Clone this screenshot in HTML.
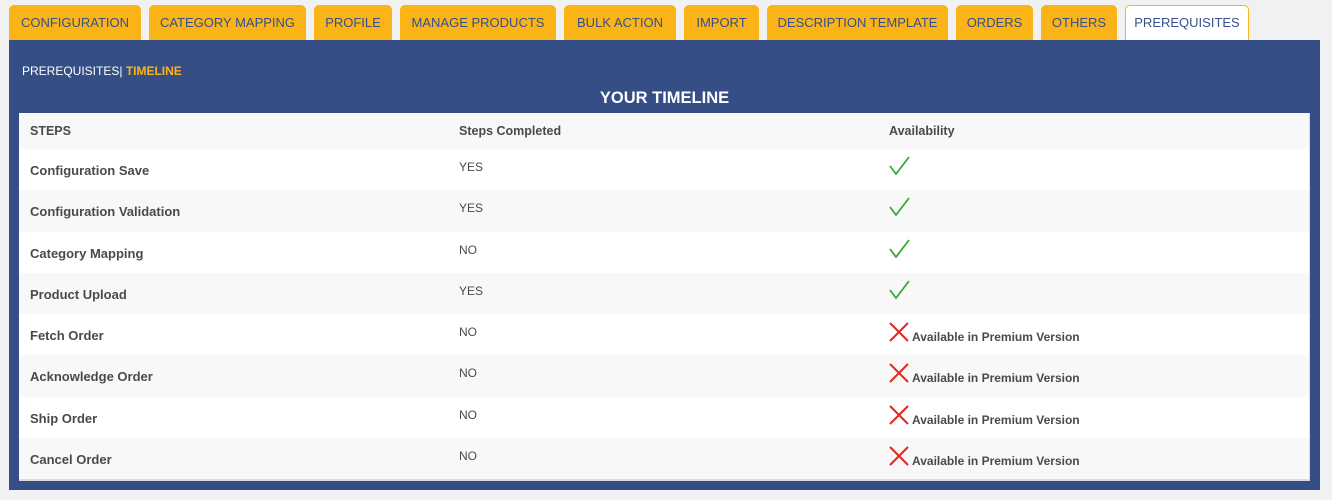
<!DOCTYPE html>
<html><head><style>
body{margin:0;background:#f1f1f1;width:1332px;height:500px;position:relative;font-family:"Liberation Sans",sans-serif;overflow:hidden}
.tab{position:absolute;top:5px;height:35px;background:#fab418;border-radius:5px 5px 0 0;color:#35508a;font-size:13px;line-height:36px;text-align:center;box-sizing:border-box}
.tab.act{background:#fff;border:1px solid #fab418;border-bottom:none;line-height:33px;color:#35508a}
.panel{position:absolute;left:9px;top:40px;width:1311px;height:450px;background:#354f86}
.sub{position:absolute;left:13px;top:24px;font-size:12px;color:#fff}
.sub b{color:#fab418}
.title{position:absolute;left:0;width:100%;top:49px;text-align:center;color:#fff;font-weight:bold;font-size:16.5px}
.tbl{position:absolute;left:10px;top:73px;width:1290px;background:#fff;border-right:1px solid #ddd;border-bottom:2px solid #ddd}
.row{position:relative;height:41.25px;font-size:13px;color:#4a4a4a;font-weight:bold}
.row:nth-child(odd){background:#f8f8f8}
.row.h{height:36px}
.c1{position:absolute;left:11px;top:14px}
.c2{position:absolute;left:440px;top:11px;font-weight:normal;font-size:12px}
.c3{position:absolute;left:870px;top:6px}
.x{top:8px}
.h .c1,.h .c2,.h .c3{top:11px;font-weight:bold;font-size:12.5px}
.prem{font-size:12px;position:relative;top:-1px;margin-left:3px}
</style></head><body>
<div class="tab" style="left:9px;width:132px">CONFIGURATION</div>
<div class="tab" style="left:149px;width:157px">CATEGORY MAPPING</div>
<div class="tab" style="left:314px;width:78px">PROFILE</div>
<div class="tab" style="left:400px;width:156px">MANAGE PRODUCTS</div>
<div class="tab" style="left:564px;width:112px">BULK ACTION</div>
<div class="tab" style="left:684px;width:75px">IMPORT</div>
<div class="tab" style="left:767px;width:181px">DESCRIPTION TEMPLATE</div>
<div class="tab" style="left:956px;width:77px">ORDERS</div>
<div class="tab" style="left:1041px;width:76px">OTHERS</div>
<div class="tab act" style="left:1125px;width:124px">PREREQUISITES</div>
<div class="panel">
<div class="sub">PREREQUISITES| <b>TIMELINE</b></div>
<div class="title">YOUR TIMELINE</div>
<div class="tbl">
<div class="row h"><span class="c1">STEPS</span><span class="c2">Steps Completed</span><span class="c3">Availability</span></div>
<div class="row"><span class="c1">Configuration Save</span><span class="c2">YES</span><span class="c3"><svg width="22" height="22" viewBox="0 0 22 22"><path d="M1 11 L7 19 L20 2" fill="none" stroke="#3aa832" stroke-width="1.8"/></svg></span></div>
<div class="row"><span class="c1">Configuration Validation</span><span class="c2">YES</span><span class="c3"><svg width="22" height="22" viewBox="0 0 22 22"><path d="M1 11 L7 19 L20 2" fill="none" stroke="#3aa832" stroke-width="1.8"/></svg></span></div>
<div class="row"><span class="c1">Category Mapping</span><span class="c2">NO</span><span class="c3"><svg width="22" height="22" viewBox="0 0 22 22"><path d="M1 11 L7 19 L20 2" fill="none" stroke="#3aa832" stroke-width="1.8"/></svg></span></div>
<div class="row"><span class="c1">Product Upload</span><span class="c2">YES</span><span class="c3"><svg width="22" height="22" viewBox="0 0 22 22"><path d="M1 11 L7 19 L20 2" fill="none" stroke="#3aa832" stroke-width="1.8"/></svg></span></div>
<div class="row"><span class="c1">Fetch Order</span><span class="c2">NO</span><span class="c3 x"><svg width="20" height="20" viewBox="0 0 20 20"><path d="M1 1 L19 19 M19 1 L1 19" stroke="#e5261a" stroke-width="2"/></svg><span class="prem">Available in Premium Version</span></span></div>
<div class="row"><span class="c1">Acknowledge Order</span><span class="c2">NO</span><span class="c3 x"><svg width="20" height="20" viewBox="0 0 20 20"><path d="M1 1 L19 19 M19 1 L1 19" stroke="#e5261a" stroke-width="2"/></svg><span class="prem">Available in Premium Version</span></span></div>
<div class="row"><span class="c1">Ship Order</span><span class="c2">NO</span><span class="c3 x"><svg width="20" height="20" viewBox="0 0 20 20"><path d="M1 1 L19 19 M19 1 L1 19" stroke="#e5261a" stroke-width="2"/></svg><span class="prem">Available in Premium Version</span></span></div>
<div class="row"><span class="c1">Cancel Order</span><span class="c2">NO</span><span class="c3 x"><svg width="20" height="20" viewBox="0 0 20 20"><path d="M1 1 L19 19 M19 1 L1 19" stroke="#e5261a" stroke-width="2"/></svg><span class="prem">Available in Premium Version</span></span></div>
</div>
</div>
</body></html>
